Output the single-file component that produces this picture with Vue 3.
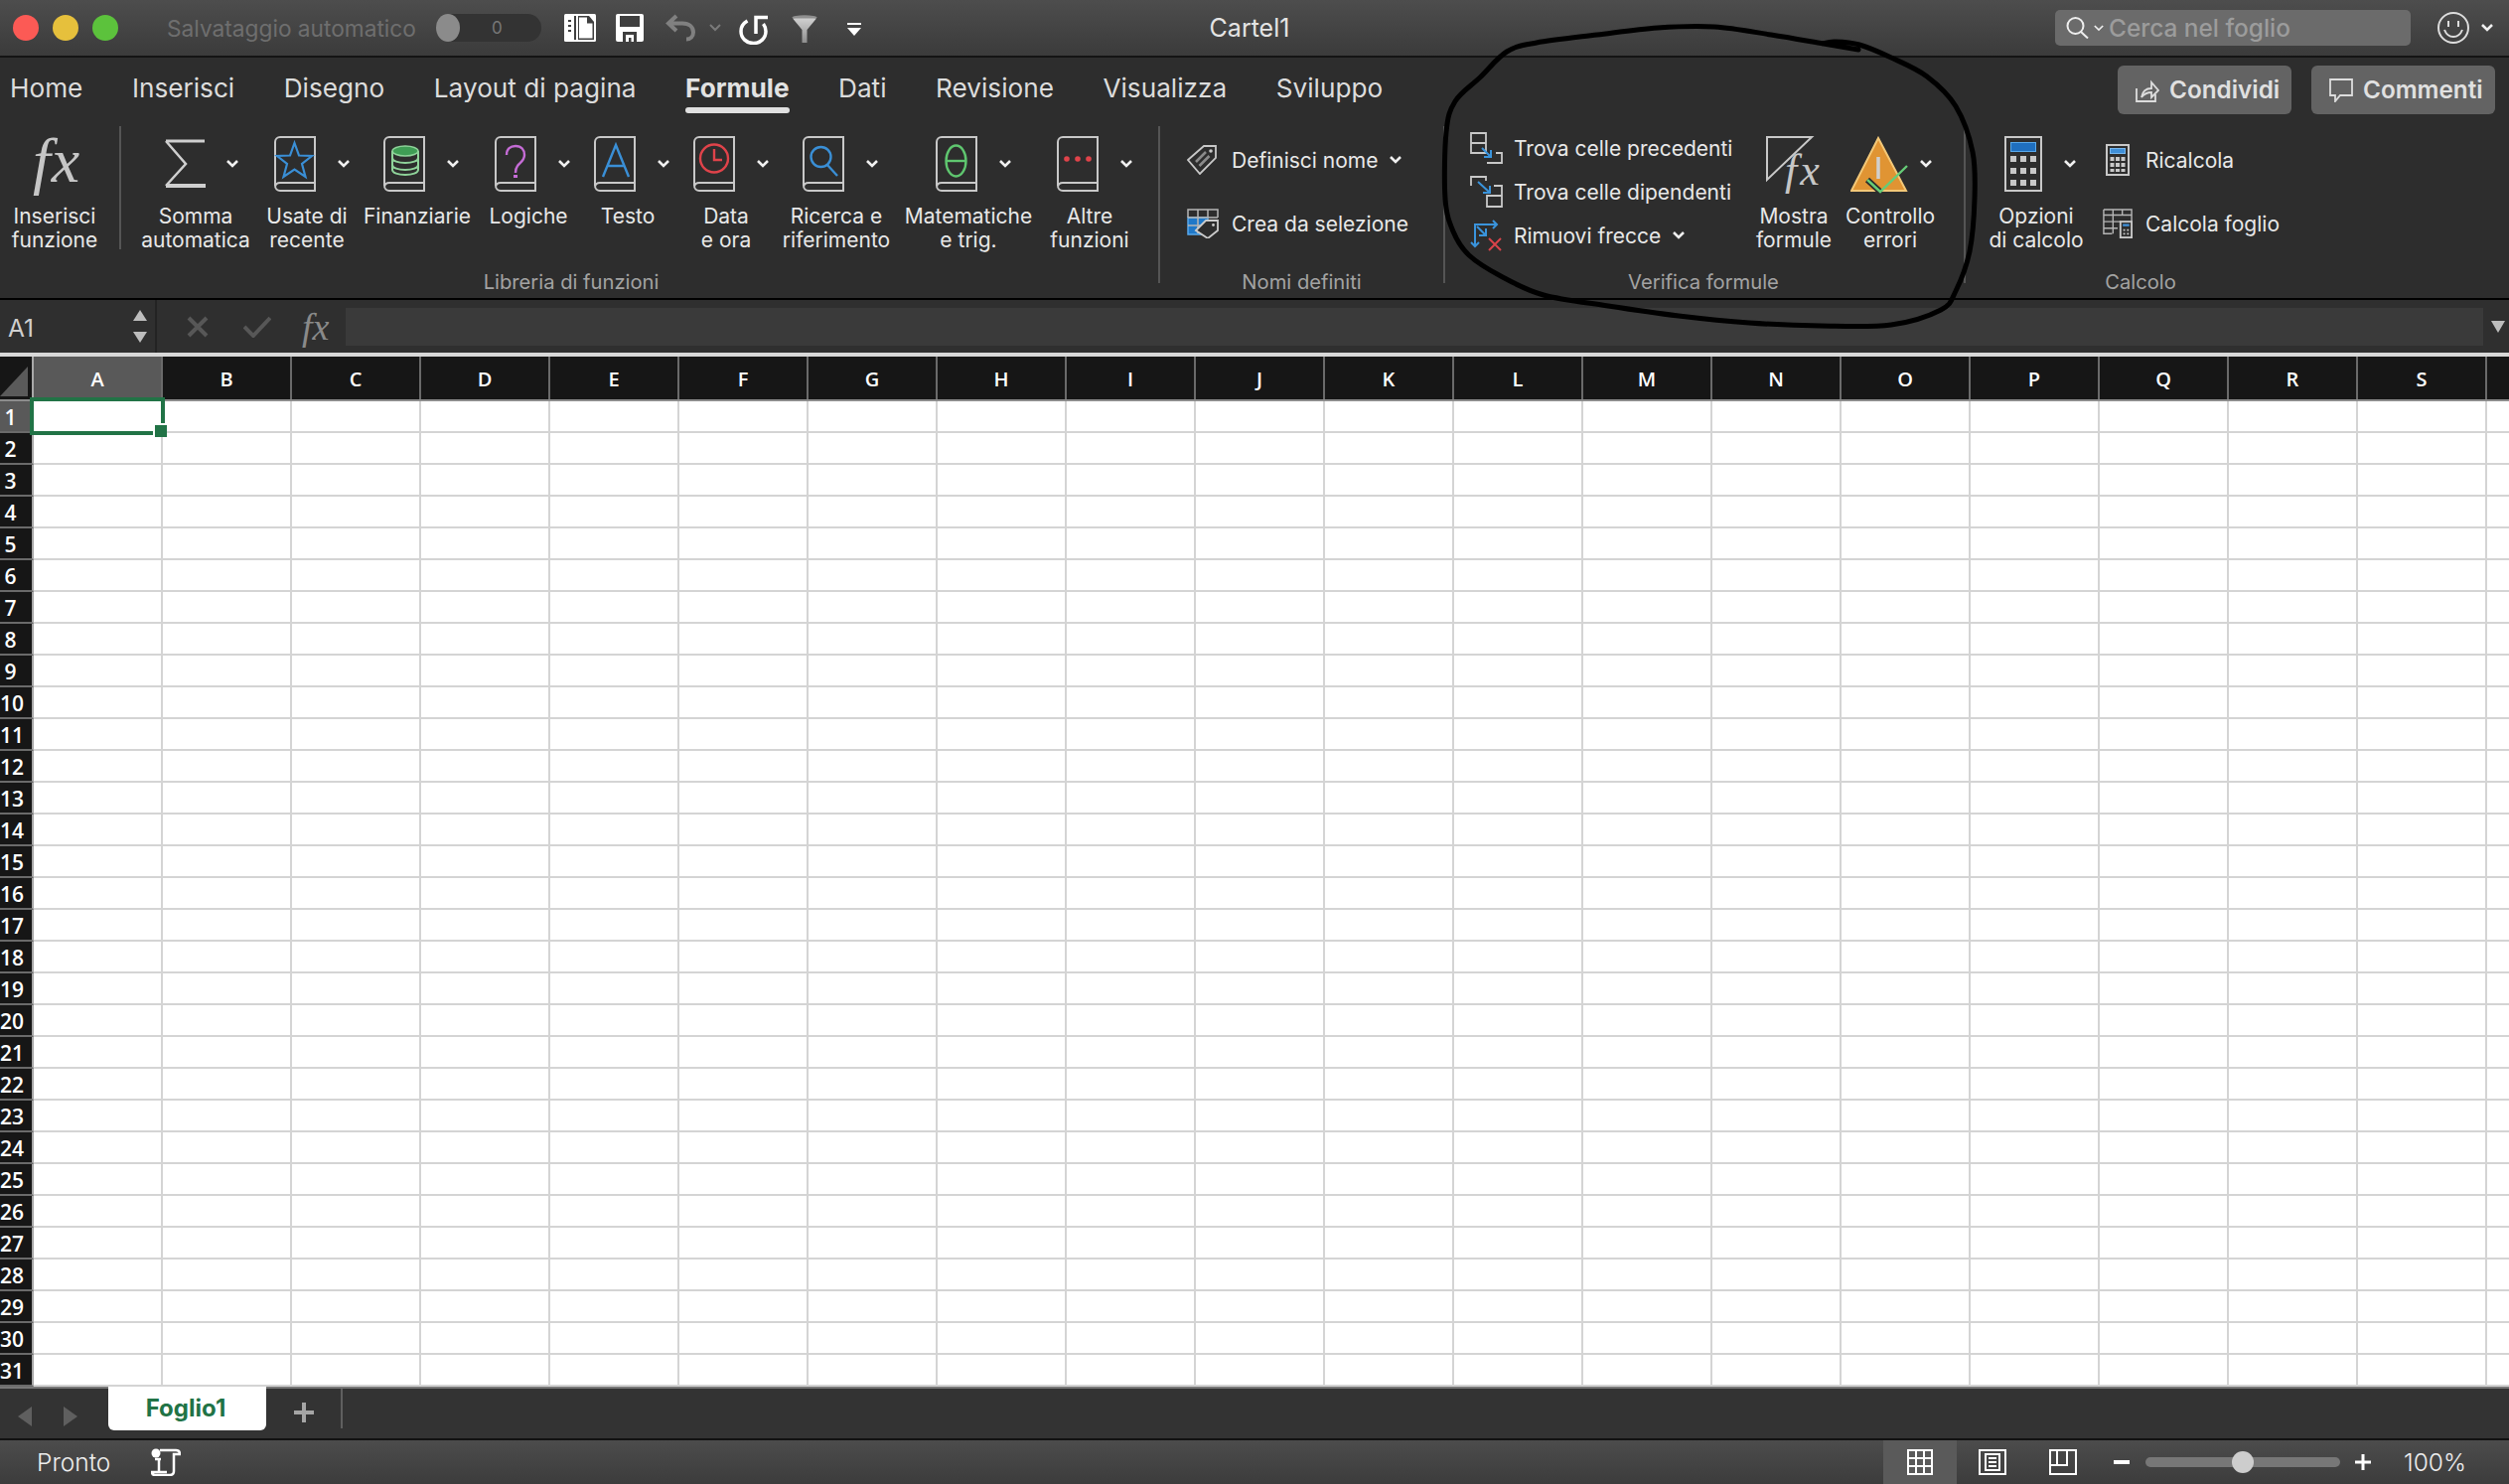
<script setup>
import { computed } from 'vue'

const tabs = ['Home', 'Inserisci', 'Disegno', 'Layout di pagina', 'Formule', 'Dati', 'Revisione', 'Visualizza', 'Sviluppo']

// width = slot for the label, left = where the book starts inside it
const libraryButtons = [
  { id: 'sum', lines: ['Somma', 'automatica'], width: 120, left: 29 },
  { id: 'star', lines: ['Usate di', 'recente'], width: 104, left: 19 },
  { id: 'db', lines: ['Finanziarie'], width: 118, left: 25 },
  { id: 'help', lines: ['Logiche'], width: 106, left: 19 },
  { id: 'text', lines: ['Testo'], width: 94, left: 13 },
  { id: 'clock', lines: ['Data', 'e ora'], width: 104, left: 19 },
  { id: 'lookup', lines: ['Ricerca e', 'riferimento'], width: 118, left: 25 },
  { id: 'theta', lines: ['Matematiche', 'e trig.'], width: 148, left: 41 },
  { id: 'more', lines: ['Altre', 'funzioni'], width: 96, left: 15 }
]

const columns = 'ABCDEFGHIJKLMNOPQRS'.split('').concat('')
const rows = Array.from({ length: 31 }, (_, i) => i + 1)

// the hand drawn loop around "Verifica formule"
const loopPoints = [
  [1871, 50], [1836, 44], [1783, 35], [1726, 27], [1669, 28], [1608, 35], [1547, 43], [1517, 52],
  [1490, 78], [1465, 102], [1456, 133], [1455, 200], [1463, 233], [1479, 257], [1511, 278], [1554, 297],
  [1619, 308], [1690, 318], [1761, 325], [1833, 328], [1904, 327], [1954, 312], [1969, 293], [1983, 253],
  [1988, 200], [1986, 153], [1969, 107], [1940, 77], [1904, 58], [1872, 45], [1847, 42], [1835, 44]
]

const loopPath = computed(() => {
  const p = loopPoints
  let d = `M${p[0][0]} ${p[0][1]}`
  for (let i = 0; i < p.length - 1; i++) {
    const a = p[Math.max(i - 1, 0)]
    const b = p[i]
    const c = p[i + 1]
    const e = p[Math.min(i + 2, p.length - 1)]
    const c1x = b[0] + (c[0] - a[0]) / 6
    const c1y = b[1] + (c[1] - a[1]) / 6
    const c2x = c[0] - (e[0] - b[0]) / 6
    const c2y = c[1] - (e[1] - b[1]) / 6
    d += ` C${c1x} ${c1y} ${c2x} ${c2y} ${c[0]} ${c[1]}`
  }
  return d
})
</script>

<template>
  <div class="app">
    <header class="titlebar">
      <div class="quick">
        <span class="light red"></span>
        <span class="light yellow"></span>
        <span class="light green"></span>
        <span class="autosave">Salvataggio automatico</span>
        <span class="toggle"><i></i><b>0</b></span>
        <svg class="qa pane" viewBox="0 0 32 28" width="32" height="28">
          <rect width="32" height="28" rx="1.5" fill="#fff" />
          <rect x="10" y="2" width="2" height="24" fill="#3f3f3f" />
          <path d="M4 6h3v2H4zM4 11h3v2H4zM4 16h3v2H4z" fill="#3f3f3f" />
          <path d="M14 2h11l5 6v18H14z" fill="#3f3f3f" />
          <path d="M15 3.500h8v6h5.500v15H15z" fill="#fff" />
        </svg>
        <svg class="qa save" viewBox="0 0 28 28" width="28" height="28">
          <rect width="28" height="28" rx="2" fill="#fff" />
          <rect x="4" y="2" width="20" height="11" fill="#3f3f3f" />
          <rect x="7" y="18" width="14" height="10" fill="#3f3f3f" />
          <rect x="10" y="21" width="8" height="7" fill="#fff" />
          <rect x="13" y="24" width="2.500" height="4" fill="#3f3f3f" />
        </svg>
        <svg class="qa undo" viewBox="0 0 30 28" width="30" height="28" fill="none" stroke="#808080" stroke-width="4">
          <path d="M11 2 3 9.500 11 17M3 9.500h14c7 0 11 3.500 11 9 0 4-3 7-7 7" />
        </svg>
        <svg class="qa undo-more" viewBox="0 0 12 8" width="12" height="8" fill="none" stroke="#7a7a7a" stroke-width="2">
          <path d="M1 1l5 5 5-5" />
        </svg>
        <svg class="qa redo" viewBox="0 0 29 30" width="29" height="30" fill="none" stroke="#fff" stroke-width="3.500">
          <path d="M8.500 6C4 8.500 2 12 2 16.500 2 23.500 7.500 28.500 14.500 28.500S27 23.500 27 16.500c0-3-1-5.500-2.500-7.500" />
          <path d="M17 19V2.500h12" />
        </svg>
        <svg class="qa filter" viewBox="0 0 26 28" width="26" height="28">
          <defs>
            <linearGradient id="funnel" x1="0" y1="0" x2="0" y2="1">
              <stop offset="0" stop-color="#d0d0d0" />
              <stop offset="1" stop-color="#8e8e8e" />
            </linearGradient>
          </defs>
          <ellipse cx="13" cy="2.500" rx="12.500" ry="2.200" fill="#8f8f8f" />
          <path d="M1 3.500h24L15.500 15v13h-5V15z" fill="url(#funnel)" />
        </svg>
        <svg class="qa custom" viewBox="0 0 14 13" width="14" height="13">
          <rect width="14" height="2" fill="#fff" />
          <path d="M0 5h14l-7 8z" fill="#fff" />
        </svg>
      </div>
      <div class="doc-title">Cartel1</div>
      <div class="title-right">
        <div class="search">
          <svg viewBox="0 0 24 22" width="24" height="22" fill="none" stroke="#eee" stroke-width="2">
            <circle cx="9.500" cy="9" r="8" />
            <path d="M15 15l7 6.500" />
          </svg>
          <svg class="search-chev" viewBox="0 0 12 8" width="10" height="7" fill="none" stroke="#eee" stroke-width="2">
            <path d="M1 1l5 5 5-5" />
          </svg>
          <span>Cerca nel foglio</span>
        </div>
        <svg class="smiley" viewBox="0 0 32 32" width="32" height="32" fill="none" stroke="#ddd" stroke-width="2">
          <circle cx="16" cy="16" r="15" />
          <path d="M11 9v6M21 9v6" />
          <path d="M7 18c2 5 5 7 9 7s7-2 9-7" />
        </svg>
        <svg class="chev smiley-chev" viewBox="0 0 12 8" width="12" height="8">
          <path d="M1 1l5 5 5-5" />
        </svg>
      </div>
    </header>

    <section class="ribbon">
      <div class="tabs-row">
        <nav class="tabs">
          <span v-for="t in tabs" :key="t" class="tab" :class="{ active: t === 'Formule' }">{{ t }}</span>
        </nav>
        <div class="share-buttons">
          <button class="pill condividi">
            <svg viewBox="0 0 24 24" width="24" height="24" fill="none" stroke="#ddd" stroke-width="1.800">
              <path d="M1 10v13h19v-7" />
              <path d="M6 19c1-6 5-9 10-9V4l7 8-7 7v-5c-4 0-7 1-10 5z" />
            </svg>
            <span>Condividi</span>
          </button>
          <button class="pill commenti">
            <svg viewBox="0 0 24 24" width="24" height="24" fill="none" stroke="#ddd" stroke-width="1.800">
              <path d="M1 1h22v16H11l-5 6v-6H1z" />
            </svg>
            <span>Commenti</span>
          </button>
        </div>
      </div>

      <div class="groups">
        <div class="group library">
          <div class="group-body">
            <div class="big insert">
              <div class="icon-row fx-row"><span class="fx">fx</span></div>
              <div class="label">Inserisci<br />funzione</div>
            </div>
            <span class="sep short"></span>
            <div class="spacer"></div>
            <div
              v-for="b in libraryButtons"
              :key="b.id"
              class="big"
              :style="{ width: b.width + 'px', '--left': b.left + 'px' }"
            >
              <div class="icon-row">
                <svg v-if="b.id === 'sum'" class="ico sum" viewBox="0 0 42 50" width="42" height="50" fill="none" stroke="#cfcfcf">
                  <path d="M1 2h39" stroke-width="3" />
                  <path d="M1 2l20 23L1 47" stroke-width="2.500" />
                  <path d="M1 47h40" stroke-width="4" />
                </svg>
                <svg v-else class="ico" viewBox="0 0 42 56" width="42" height="56" fill="none">
                  <path d="M6 1h35v54H6a5 5 0 0 1-5-5V6a5 5 0 0 1 5-5z M41 47H6a5 5 0 0 0-5 4" stroke="#c8c8c8" stroke-width="2" />
                  <path v-if="b.id === 'star'" d="M20.500 7l4.500 12.500 13 .5-10 8 3.500 13-11-7.500-11 7.500 3.500-13-10-8 13-.5z" stroke="#3a8fd6" stroke-width="2.200" />
                  <g v-if="b.id === 'db'">
                    <ellipse cx="22" cy="15" rx="13" ry="5" fill="#3f9d55" stroke="#8fd39a" stroke-width="1.500" />
                    <path d="M9 15v19c0 3 6 5 13 5s13-2 13-5V15M9 22c0 3 6 5 13 5s13-2 13-5M9 29c0 3 6 5 13 5s13-2 13-5" stroke="#8fd39a" stroke-width="2" />
                  </g>
                  <g v-if="b.id === 'help'" stroke="#c56cd6">
                    <path d="M12 19c0-6 4-9 9-9 6 0 9 4 9 9 0 6-5 8-7 11-1.500 2-2 4-2 7" stroke-width="2.400" />
                    <path d="M21 39v3" stroke-width="4" />
                  </g>
                  <path v-if="b.id === 'text'" d="M9 41l13-32 13 32M13.500 30h17" stroke="#3a8fd6" stroke-width="2.400" />
                  <g v-if="b.id === 'clock'" stroke="#e0434a" stroke-width="2.400">
                    <circle cx="21" cy="22.500" r="14" />
                    <path d="M21 13v11h8" />
                  </g>
                  <g v-if="b.id === 'lookup'" stroke="#3a8fd6" stroke-width="2.400">
                    <circle cx="18.500" cy="21" r="10" />
                    <path d="M25 29l10 11" />
                  </g>
                  <g v-if="b.id === 'theta'" stroke="#5fc66f" stroke-width="2.400">
                    <ellipse cx="20.500" cy="25" rx="10" ry="15.500" />
                    <path d="M10 25h21" />
                  </g>
                  <g v-if="b.id === 'more'" fill="#e0434a">
                    <circle cx="10" cy="23" r="2.800" />
                    <circle cx="21" cy="23" r="2.800" />
                    <circle cx="32" cy="23" r="2.800" />
                  </g>
                </svg>
                <svg class="chev" viewBox="0 0 12 8" width="12" height="8"><path d="M1 1l5 5 5-5" /></svg>
              </div>
              <div class="label">
                <template v-for="(l, i) in b.lines" :key="l"><br v-if="i" />{{ l }}</template>
              </div>
            </div>
          </div>
          <div class="group-label">Libreria di funzioni</div>
        </div>
        <span class="sep"></span>

        <div class="group names">
          <div class="group-body">
            <div class="list">
              <div class="list-item">
                <svg class="tag-ico" viewBox="0 0 30 30" width="30" height="30" fill="none" stroke="#c8c8c8" stroke-width="1.800">
                  <path d="M1 15L17 1h12v12L13 29z" />
                  <circle cx="24" cy="6" r="1.800" fill="#c8c8c8" stroke="none" />
                  <path d="M9 17L19 7M12.500 21L22.500 11" stroke="#8a8a8a" stroke-width="2.600" />
                </svg>
                <span>Definisci nome</span>
                <svg class="chev" viewBox="0 0 12 8" width="12" height="8"><path d="M1 1l5 5 5-5" /></svg>
              </div>
              <div class="list-item">
                <svg class="table-ico" viewBox="0 0 32 30" width="32" height="30" fill="none" stroke="#b5b5b5" stroke-width="1.500">
                  <rect x="1" y="9" width="20" height="17" fill="#1f78c8" stroke="#58a8ea" />
                  <path d="M1 9V1h30v8M11 1v24M21 1v8M1 9h30M1 17h20" />
                  <path d="M9 22L19 12h12v10L21 30z" fill="#2d2d2d" stroke="#ccc" stroke-width="1.800" />
                  <circle cx="26.500" cy="16.500" r="1.400" fill="#ccc" stroke="none" />
                </svg>
                <span>Crea da selezione</span>
              </div>
            </div>
          </div>
          <div class="group-label">Nomi definiti</div>
        </div>
        <span class="sep"></span>

        <div class="group audit">
          <div class="group-body">
            <div class="list">
              <div class="list-item">
                <svg viewBox="0 0 34 32" width="34" height="32" fill="none" stroke="#c8c8c8" stroke-width="1.800">
                  <path d="M1 1h15v20H1zM1 11h15M17 31h15V21h-6" />
                  <path d="M12 16l9 9M21 18v7h-7" stroke="#3a94dc" stroke-width="2" />
                </svg>
                <span>Trova celle precedenti</span>
              </div>
              <div class="list-item">
                <svg viewBox="0 0 34 32" width="34" height="32" fill="none" stroke="#c8c8c8" stroke-width="1.800">
                  <path d="M1 10V1h15v4M24 10h8v10M17 20h15v11H17z" />
                  <path d="M8 6l12 11M20 10v7h-7" stroke="#3a94dc" stroke-width="2" />
                </svg>
                <span>Trova celle dipendenti</span>
              </div>
              <div class="list-item">
                <svg viewBox="0 0 34 32" width="34" height="32" fill="none" stroke="#3a94dc" stroke-width="2">
                  <path d="M5 27V5h22M23 1l4 4-4 4M1 23l4 4 4-4M7 7l9 9M16 9v7H9" />
                  <path d="M19 19l12 12M31 19L19 31" stroke="#d9434a" />
                </svg>
                <span>Rimuovi frecce</span>
                <svg class="chev" viewBox="0 0 12 8" width="12" height="8"><path d="M1 1l5 5 5-5" /></svg>
              </div>
            </div>
            <div class="big show-formulas">
              <div class="icon-row">
                <svg class="ico" viewBox="0 0 58 60" width="58" height="60" fill="none">
                  <path d="M1 1h45L1 44z" stroke="#c8c8c8" stroke-width="2" />
                  <text x="19" y="49" class="svg-fx">fx</text>
                </svg>
              </div>
              <div class="label">Mostra<br />formule</div>
            </div>
            <div class="big check-errors">
              <div class="icon-row">
                <svg class="ico" viewBox="0 0 58 58" width="58" height="58" fill="none">
                  <path d="M28 2L56 55H1z" fill="#e09433" stroke="#f3c878" stroke-width="2" />
                  <path d="M28 21v22" stroke="#cfcfcf" stroke-width="3.500" />
                  <path d="M17 44l13 12" stroke="#2b2b2b" stroke-width="6" />
                  <path d="M17 44l13 12 27-26" stroke="#66cc77" stroke-width="2.400" />
                </svg>
                <svg class="chev" viewBox="0 0 12 8" width="12" height="8"><path d="M1 1l5 5 5-5" /></svg>
              </div>
              <div class="label">Controllo<br />errori</div>
            </div>
          </div>
          <div class="group-label">Verifica formule</div>
        </div>
        <span class="sep"></span>

        <div class="group calc">
          <div class="group-body">
            <div class="big calc-options">
              <div class="icon-row">
                <svg class="ico" viewBox="0 0 38 56" width="38" height="56" fill="none">
                  <rect x="1" y="1" width="36" height="54" stroke="#c8c8c8" stroke-width="2" />
                  <rect x="6.500" y="6.500" width="25" height="9" fill="#1f6fbf" stroke="#58a8ea" />
                  <path d="M6 20h6v6H6zM16 20h6v6h-6zM26 20h6v6h-6zM6 32h6v6H6zM16 32h6v6h-6zM26 32h6v6h-6zM6 44h6v6H6zM16 44h6v6h-6zM26 44h6v6h-6z" fill="#c8c8c8" />
                </svg>
                <svg class="chev" viewBox="0 0 12 8" width="12" height="8"><path d="M1 1l5 5 5-5" /></svg>
              </div>
              <div class="label">Opzioni<br />di calcolo</div>
            </div>
            <div class="list">
              <div class="list-item">
                <svg viewBox="0 0 32 32" width="32" height="32" fill="none">
                  <rect x="5" y="1" width="22" height="30" stroke="#c8c8c8" stroke-width="2" />
                  <rect x="8.500" y="4.500" width="15" height="5" fill="#3f8fd8" stroke="#78b8ee" />
                  <path d="M8.500 13h4v4h-4zM14 13h4v4h-4zM19.500 13h4v4h-4zM8.500 19h4v4h-4zM14 19h4v4h-4zM19.500 19h4v4h-4zM8.500 25h4v3h-4zM14 25h4v3h-4zM19.500 25h4v3h-4z" fill="#c8c8c8" />
                </svg>
                <span>Ricalcola</span>
              </div>
              <div class="list-item">
                <svg viewBox="0 0 32 32" width="32" height="30" fill="none" stroke="#b5b5b5" stroke-width="1.500">
                  <path d="M1 1h30v19M1 1v26h9M1 7h30M1 14h18M1 21h15M11 1v26M21 1v6" />
                  <rect x="19" y="14" width="12" height="17" fill="#2d2d2d" stroke="#c8c8c8" stroke-width="2" />
                  <rect x="21.500" y="16.500" width="7" height="2.500" fill="#3f8fd8" stroke="none" />
                  <path d="M22 22h2v2h-2zM26 22h2v2h-2zM22 26h2v2h-2zM26 26h2v2h-2z" fill="#c8c8c8" stroke="none" />
                </svg>
                <span>Calcola foglio</span>
              </div>
            </div>
          </div>
          <div class="group-label">Calcolo</div>
        </div>
      </div>
    </section>

    <section class="formula-bar">
      <div class="name-box">
        <span class="cell-name">A1</span>
        <div class="spin"><i class="up"></i><i class="down"></i></div>
      </div>
      <svg class="fb-x" viewBox="0 0 22 22" width="22" height="22" fill="none" stroke="#575757" stroke-width="4"><path d="M2 2l18 18M20 2L2 20" /></svg>
      <svg class="fb-check" viewBox="0 0 28 22" width="28" height="22" fill="none" stroke="#575757" stroke-width="4"><path d="M1 11l9 9L27 2" /></svg>
      <span class="fb-fx">fx</span>
      <div class="fb-input"></div>
      <i class="fb-drop"></i>
    </section>

    <section class="sheet">
      <div class="col-head">
        <div class="corner"><i></i></div>
        <div v-for="c in columns" :key="c" class="col" :class="{ on: c === 'A' }">{{ c }}</div>
      </div>
      <div v-for="r in rows" :key="r" class="row">
        <div class="row-num" :class="{ on: r === 1 }"><span>{{ r }}</span></div>
        <div v-for="c in columns" :key="c" class="cell"></div>
      </div>
      <div class="selection"><i></i></div>
    </section>

    <section class="sheet-bar">
      <i class="nav prev"></i>
      <i class="nav next"></i>
      <div class="sheet-tab">Foglio1</div>
      <svg class="add" viewBox="0 0 20 20" width="20" height="20"><path d="M8 0h4v8h8v4h-8v8H8v-8H0V8h8z" fill="#a5a5a5" /></svg>
      <span class="bar-div"></span>
    </section>

    <footer class="status">
      <span class="ready">Pronto</span>
      <svg class="macro" viewBox="0 0 30 28" width="30" height="28" fill="none" stroke="#fff" stroke-width="2.500">
        <circle cx="5" cy="5" r="4.500" fill="#fff" stroke="none" />
        <path d="M9 2h16c3 0 4 2 4 4h-6v17c0 3-2 4-4 4H4c-2 0-3-1-3-3h15M8 11v13M4 11h6" />
      </svg>
      <div class="views">
        <span class="view on">
          <svg viewBox="0 0 26 26" width="26" height="26" fill="none" stroke="#fff" stroke-width="2"><path d="M1 1h24v24H1zM9 1v24M17 1v24M1 9h24M1 17h24" /></svg>
        </span>
        <span class="view">
          <svg viewBox="0 0 28 26" width="28" height="26" fill="none" stroke="#fff" stroke-width="2"><path d="M1 1h26v24H1zM7 5h14v16H7zM10 9h8M10 13h8M10 17h8" /></svg>
        </span>
        <span class="view">
          <svg viewBox="0 0 28 26" width="28" height="26" fill="none" stroke="#fff" stroke-width="2"><path d="M1 1h26v24H1zM8 1v15h10V1M1 16h7M18 1v15" /></svg>
        </span>
      </div>
      <i class="zoom-sign minus"></i>
      <div class="slider"><i></i></div>
      <svg class="zoom-plus" viewBox="0 0 16 16" width="16" height="16"><path d="M6.500 0h3v6.500H16v3H9.500V16h-3V9.500H0v-3h6.500z" fill="#fff" /></svg>
      <span class="percent">100%</span>
    </footer>

    <svg class="scribble" viewBox="0 0 2526 1494" width="2526" height="1494" fill="none">
      <path :d="loopPath" stroke="#000" stroke-width="5" stroke-linecap="round" stroke-linejoin="round" />
    </svg>
  </div>
</template>

<style scoped>
.app {
  position: relative;
  width: 2526px;
  height: 1494px;
  overflow: hidden;
  background: #2d2d2d;
  font-family: Inter, "Liberation Sans", sans-serif;
  color: #e8e8e8;
}

/* title bar */
.titlebar {
  display: grid;
  grid-template-columns: 880px 756px 1fr;
  align-items: center;
  height: 58px;
  box-sizing: border-box;
  border-bottom: 2px solid #141414;
  background: linear-gradient(#4d4d4d, #3b3b3b);
}
.quick {
  display: flex;
  align-items: center;
  padding-left: 13px;
}
.light {
  width: 26px;
  height: 26px;
  border-radius: 50%;
  margin-right: 14px;
}
.red { background: #fc5a55; }
.yellow { background: #e6c03c; }
.green { background: #5cc23c; }
.autosave {
  margin-left: 35px;
  width: 271px;
  font-size: 22.700px;
  color: #6e6e6e;
  white-space: nowrap;
}
.toggle {
  position: relative;
  display: flex;
  align-items: center;
  width: 106px;
  height: 28px;
  border-radius: 14px;
  background: #333;
}
.toggle i {
  width: 24px;
  height: 28px;
  border-radius: 50%;
  background: #8b8b8b;
}
.toggle b {
  margin-left: 32px;
  font-size: 17px;
  font-weight: 400;
  color: #777;
}
.qa { flex: none; }
.pane { margin-left: 23px; }
.save { margin-left: 20px; }
.undo { margin-left: 22px; }
.undo-more { margin-left: 14px; }
.redo { margin-left: 18px; margin-top: 4px; }
.filter { margin-left: 24px; margin-top: 2px; }
.custom { margin-left: 30px; margin-top: 3px; }
.doc-title {
  text-align: center;
  font-size: 25px;
  color: #e4e4e4;
}
.title-right {
  display: flex;
  align-items: center;
  padding-left: 433px;
}
.search {
  display: flex;
  align-items: center;
  flex: none;
  width: 358px;
  height: 36px;
  box-sizing: border-box;
  padding-left: 11px;
  border-radius: 5px;
  background: #6b6b6b;
  font-size: 24.400px;
  font-weight: 500;
  color: #9c9c9c;
}
.search-chev { margin: 0 5px 0 4px; }
.smiley { flex: none; margin-left: 27px; }
.smiley-chev { flex: none; margin-left: 12px; }

/* ribbon */
.ribbon {
  height: 244px;
  box-sizing: border-box;
  border-bottom: 2px solid #000;
  background: #2d2d2d;
}
.tabs-row {
  display: flex;
  justify-content: space-between;
  height: 69px;
}
.tabs {
  display: flex;
  gap: 49.500px;
  padding-left: 10px;
}
.tab {
  position: relative;
  line-height: 62px;
  font-size: 26.200px;
  color: #dcdcdc;
  white-space: nowrap;
}
.tab.active {
  font-weight: 700;
  color: #e2e2e2;
}
.tab.active::after {
  content: '';
  position: absolute;
  left: 0;
  right: 0;
  top: 50px;
  height: 6px;
  border-radius: 3px;
  background: #e0e0e0;
}
.share-buttons {
  display: flex;
  gap: 20px;
  padding: 8px 14px 0 0;
}
.pill {
  display: flex;
  align-items: center;
  gap: 10px;
  height: 49px;
  padding: 0;
  border: 0;
  border-radius: 6px;
  background: #636363;
  font-family: inherit;
  font-size: 24.300px;
  font-weight: 600;
  color: #e0e0e0;
}
.pill span { margin-top: -2px; }
.condividi { width: 175px; padding-left: 18px; }
.commenti { width: 185px; padding-left: 18px; }

.groups {
  display: flex;
  height: 173px;
}
.group {
  display: flex;
  flex-direction: column;
}
.group-body {
  display: flex;
  height: 145px;
}
.group-label {
  height: 24px;
  line-height: 24px;
  text-align: center;
  font-size: 20.200px;
  color: #a3a3a3;
}
.library { width: 1166px; }
.library .group-label { padding-right: 16px; }
.audit .group-label, .calc .group-label { padding-right: 2px; }
.names { width: 285px; }
.audit { width: 522px; }
.calc { width: 354px; }
.sep {
  flex: none;
  width: 2px;
  height: 158px;
  background: #555;
}
.sep.short { height: 124px; }
.spacer { width: 15px; }

.big {
  flex: none;
  padding-top: 10px;
  box-sizing: border-box;
  --left: 0px;
}
.icon-row {
  display: flex;
  align-items: flex-start;
  height: 56px;
  padding-left: var(--left);
}
.ico { flex: none; }
.ico.sum { margin-top: 3px; margin-right: -2px; }
.chev {
  fill: none;
  stroke: #f0f0f0;
  stroke-width: 2.600;
  flex: none;
}
.icon-row .chev { margin: 24px 0 0 22px; }
.label {
  margin-top: 13px;
  line-height: 24px;
  text-align: center;
  font-size: 21px;
  white-space: nowrap;
}
.insert { width: 110px; margin-right: 10px; }
.fx-row { justify-content: center; }
.fx, .fb-fx, .svg-fx {
  font-family: "Liberation Serif", serif;
  font-style: italic;
}
.fx {
  margin-left: 4px;
  line-height: 50px;
  font-size: 64px;
  letter-spacing: 1px;
  color: #c6c6c6;
}
.svg-fx {
  font-size: 44px;
  letter-spacing: 3px;
  fill: #c6c6c6;
}

.list {
  display: flex;
  flex-direction: column;
}
.list-item {
  display: flex;
  align-items: center;
  font-size: 21px;
  white-space: nowrap;
}
.list-item > svg:first-child { flex: none; }
.list-item .chev { margin-left: 12px; }
.names .list { padding: 19px 0 0 27px; }
.names .list-item { height: 32px; margin-bottom: 34px; }
.names .tag-ico { margin-right: 15px; }
.names .table-ico { margin-right: 13px; }
.audit .list { width: 306px; padding-left: 25px; box-sizing: border-box; }
.audit .list-item { height: 44px; }
.audit .list-item > svg:first-child { margin-right: 10px; }
.show-formulas { width: 90px; }
.show-formulas .icon-row { padding-left: 17px; }
.check-errors { width: 104px; }
.check-errors .icon-row { padding-left: 12px; }
.check-errors .icon-row .chev { margin-left: 12px; }
.calc-options { width: 132px; margin-left: 5px; flex: none; }
.calc-options .icon-row { padding-left: 34px; }
.calc .list { padding-top: 18px; }
.calc .list-item { height: 32px; margin-bottom: 33px; }
.calc .list-item > svg:first-child { margin-right: 12px; }

/* formula bar */
.formula-bar {
  display: flex;
  align-items: center;
  height: 53px;
  background: #2f2f2f;
}
.name-box {
  display: flex;
  align-items: center;
  justify-content: space-between;
  width: 158px;
  height: 100%;
  box-sizing: border-box;
  padding: 0 8px 0 8px;
  border-right: 2px solid #232323;
  font-size: 24.500px;
  color: #cfcfcf;
}
.cell-name { margin-top: 3px; }
.spin { display: flex; flex-direction: column; gap: 11px; }
.spin i {
  display: block;
  border-left: 7px solid transparent;
  border-right: 7px solid transparent;
}
.spin .up { border-bottom: 11px solid #bdbdbd; }
.spin .down { border-top: 11px solid #bdbdbd; }
.fb-x { margin-left: 30px; }
.fb-check { margin-left: 35px; }
.fb-fx {
  margin-left: 31px;
  font-size: 38px;
  line-height: 38px;
  color: #8a8a8a;
}
.fb-input {
  flex: none;
  width: 2152px;
  height: 38px;
  margin-left: 17px;
  background: #3a3a3a;
}
.fb-drop {
  margin-left: 8px;
  border-left: 7px solid transparent;
  border-right: 7px solid transparent;
  border-top: 12px solid #bdbdbd;
}

/* sheet */
.sheet {
  position: relative;
  border-top: 4px solid #d8d8d8;
  background: #fff;
}
.col-head {
  display: flex;
  height: 45px;
  box-sizing: border-box;
  border-bottom: 2px solid #8c8c8c;
  background: #161616;
}
.corner {
  position: relative;
  flex: none;
  width: 34px;
  box-sizing: border-box;
  border-right: 2px solid #a8a8a8;
}
.corner i {
  position: absolute;
  left: 0;
  bottom: 3px;
  border-bottom: 30px solid #5a5a5a;
  border-left: 28px solid transparent;
}
.col {
  flex: none;
  width: 130px;
  box-sizing: border-box;
  border-right: 2px solid #6a6a6a;
  line-height: 45px;
  text-align: center;
  font-family: "Open Sans", sans-serif;
  font-size: 20px;
  font-weight: 600;
  color: #fff;
}
.col.on { background: #595959; }
.row {
  display: flex;
  height: 32px;
}
.row-num {
  flex: none;
  width: 34px;
  box-sizing: border-box;
  border-right: 2px solid #a8a8a8;
  border-bottom: 2px solid #6a6a6a;
  background: #161616;
  font-family: "Open Sans", sans-serif;
  font-size: 21px;
  font-weight: 600;
  line-height: 32px;
  color: #fff;
}
.row-num span {
  display: block;
  width: 21px;
  height: 30px;
  text-align: center;
  white-space: nowrap;
}
.row-num.on { background: #595959; }
.cell {
  flex: none;
  width: 130px;
  box-sizing: border-box;
  border-right: 2px solid #d4d4d4;
  border-bottom: 2px solid #d4d4d4;
}
.selection {
  position: absolute;
  left: 30px;
  top: 41px;
  width: 136px;
  height: 38px;
  box-sizing: border-box;
  border: 4px solid #217346;
}
.selection i {
  position: absolute;
  right: -6px;
  bottom: -6px;
  width: 14px;
  height: 14px;
  box-sizing: border-box;
  border: 2px solid #fff;
  border-width: 2px 0 0 2px;
  background: #217346;
}

/* sheet tabs */
.sheet-bar {
  display: flex;
  align-items: flex-start;
  height: 52px;
  box-sizing: border-box;
  border-top: 2px solid #777;
  background: #333;
}
.nav {
  margin-top: 18px;
  border-top: 10px solid transparent;
  border-bottom: 10px solid transparent;
}
.prev { margin-left: 18px; border-right: 14px solid #5f5f5f; }
.next { margin-left: 32px; border-left: 14px solid #5f5f5f; }
.sheet-tab {
  width: 159px;
  height: 44px;
  margin: -2px 0 0 31px;
  box-sizing: border-box;
  padding-right: 3px;
  border-radius: 0 0 6px 6px;
  background: #fff;
  line-height: 44px;
  text-align: center;
  font-size: 24px;
  font-weight: 700;
  color: #217346;
}
.add { margin: 14px 0 0 28px; }
.bar-div {
  width: 2px;
  height: 40px;
  margin-left: 27px;
  background: #5f5f5f;
}

/* status bar */
.status {
  position: relative;
  display: flex;
  align-items: center;
  height: 46px;
  box-sizing: border-box;
  border-top: 2px solid #111;
  background: linear-gradient(#4c4c4c, #3c3c3c);
}
.ready {
  width: 73px;
  margin-left: 37px;
  font-size: 24.500px;
  font-weight: 300;
  color: #eee;
}
.macro { margin-left: 42px; }
.views {
  display: flex;
  height: 100%;
  margin-left: 1714px;
}
.view {
  display: flex;
  align-items: center;
  justify-content: center;
  width: 71px;
  height: 100%;
}
.view.on { width: 74px; background: #5a5a5a; }
.minus {
  width: 16px;
  height: 4px;
  margin-left: 16px;
  background: #fff;
}
.slider {
  position: relative;
  width: 196px;
  height: 10px;
  margin-left: 16px;
  border-radius: 5px;
  background: #777;
}
.slider i {
  position: absolute;
  left: 87px;
  top: -6px;
  width: 22px;
  height: 22px;
  border-radius: 50%;
  background: #cdcdcd;
}
.zoom-plus { margin-left: 15px; }
.percent {
  margin-left: 33px;
  font-size: 24.500px;
  font-weight: 300;
  color: #eee;
}

/* pen mark lying over the screenshot */
.scribble {
  position: absolute;
  left: 0;
  top: 0;
  pointer-events: none;
}
</style>
